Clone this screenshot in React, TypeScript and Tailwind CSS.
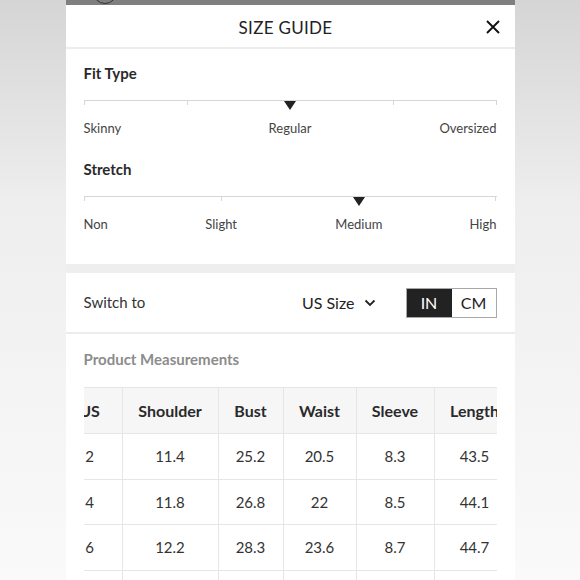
type Row = {
  us: string;
  shoulder: string;
  bust: string;
  waist: string;
  sleeve: string;
  length: string;
};

const rows: Row[] = [
  { us: "2", shoulder: "11.4", bust: "25.2", waist: "20.5", sleeve: "8.3", length: "43.5" },
  { us: "4", shoulder: "11.8", bust: "26.8", waist: "22", sleeve: "8.5", length: "44.1" },
  { us: "6", shoulder: "12.2", bust: "28.3", waist: "23.6", sleeve: "8.7", length: "44.7" },
  { us: "8", shoulder: "12.6", bust: "29.9", waist: "25.2", sleeve: "8.9", length: "45.3" },
];

function Marker({ className }: { className: string }) {
  return (
    <span
      className={`absolute top-[1px] h-0 w-0 -translate-x-1/2 border-x-[6px] border-t-[9px] border-x-transparent border-t-[#222] ${className}`}
    />
  );
}

function Track({ segments }: { segments: number }) {
  return (
    <div className="flex h-[5px] border-t-[1.5px] border-[#d6d6d6]">
      {Array.from({ length: segments }).map((_, i) => (
        <div
          key={i}
          className={`flex-1 border-l border-[#d6d6d6] ${i === segments - 1 ? "border-r" : ""}`}
        />
      ))}
    </div>
  );
}

export default function App() {
  return (
    <div className="flex h-[580px] w-[580px] justify-center overflow-hidden bg-linear-to-b from-[#d5d5d5] via-[#eeeeee] via-35% to-[#fafafa] font-[family-name:Lato,sans-serif] text-[#333]">
      <div className="flex w-[449px] flex-col bg-white">
        <div className="relative h-[5px] shrink-0 overflow-hidden bg-[#7f7f7f]">
          <span className="absolute left-[27px] top-[-20px] h-[24px] w-[24px] rounded-full border-[1.5px] border-[#333]" />
        </div>

        <div className="relative flex h-[42px] shrink-0 items-center justify-center pr-[9px] pt-[3px]">
          <h2 className="text-[17px] tracking-[0.3px] text-[#222]">SIZE GUIDE</h2>
          <svg
            className="absolute right-[15px] top-[15px]"
            width="14"
            height="14"
            viewBox="0 0 14 14"
            fill="none"
          >
            <path d="M1 1l12 12M13 1 1 13" stroke="#111" strokeWidth="1.9" />
          </svg>
        </div>
        <div className="h-[2px] shrink-0 bg-[#ececec]" />

        <section className="px-[18px] pb-[31px] pt-[14px]">
          <p className="text-[15px] font-bold leading-[20px] text-[#2a2a2a]">Fit Type</p>
          <div className="relative mt-[17px] h-[10px]">
            <Track segments={4} />
            <Marker className="left-1/2" />
          </div>
          <div className="mt-[9px] grid grid-cols-3 text-[13px] leading-[18px] text-[#444]">
            <span>Skinny</span>
            <span className="text-center">Regular</span>
            <span className="text-right">Oversized</span>
          </div>

          <p className="mt-[22px] text-[15px] font-bold leading-[20px] text-[#2a2a2a]">Stretch</p>
          <div className="relative mt-[17px] h-[10px]">
            <Track segments={3} />
            <Marker className="left-2/3" />
          </div>
          <div className="mt-[9px] grid grid-cols-[1fr_2fr_2fr_1fr] text-[13px] leading-[18px] text-[#444]">
            <span>Non</span>
            <span className="text-center">Slight</span>
            <span className="text-center">Medium</span>
            <span className="text-right">High</span>
          </div>
        </section>

        <div className="h-[9px] shrink-0 bg-[#eeeeee]" />

        <div className="flex h-[59px] shrink-0 items-center px-[18px]">
          <span className="text-[15px] text-[#333]">Switch to</span>
          <button className="ml-auto flex items-center gap-[9px] text-[16px] text-[#222]">
            US Size
            <svg width="12" height="8" viewBox="0 0 12 8" fill="none">
              <path d="M1.5 1.5 6 6l4.5-4.5" stroke="#222" strokeWidth="1.8" />
            </svg>
          </button>
          <div className="ml-[30px] flex h-[30px] border border-[#a8a8a8] text-[16px]">
            <span className="flex w-[45px] items-center justify-center bg-[#222] text-white">IN</span>
            <span className="flex w-[44px] items-center justify-center bg-white text-[#222]">CM</span>
          </div>
        </div>
        <div className="h-[2px] shrink-0 bg-[#ececec]" />

        <section className="px-[18px] pt-[15px]">
          <p className="text-[15px] font-bold leading-[20px] text-[#8c8c8c]">Product Measurements</p>
          <div className="mt-[18px] overflow-hidden">
            <table className="ml-[-27px] w-[458px] table-fixed border-collapse text-[15px]">
              <colgroup>
                <col className="w-[65px]" />
                <col className="w-[96px]" />
                <col className="w-[65px]" />
                <col className="w-[73px]" />
                <col className="w-[78px]" />
                <col className="w-[81px]" />
              </colgroup>
              <thead>
                <tr className="h-[46px] bg-[#f6f6f6]">
                  {["US", "Shoulder", "Bust", "Waist", "Sleeve", "Length"].map((h) => (
                    <th
                      key={h}
                      className="whitespace-nowrap border border-[#e6e6e6] text-[16px] font-bold text-[#2a2a2a]"
                    >
                      {h}
                    </th>
                  ))}
                </tr>
              </thead>
              <tbody>
                {rows.map((r) => (
                  <tr key={r.us} className="h-[45.5px]">
                    {[r.us, r.shoulder, r.bust, r.waist, r.sleeve, r.length].map((v, i) => (
                      <td key={i} className="border border-[#e6e6e6] text-center text-[#333]">
                        {v}
                      </td>
                    ))}
                  </tr>
                ))}
              </tbody>
            </table>
          </div>
        </section>
      </div>
    </div>
  );
}
